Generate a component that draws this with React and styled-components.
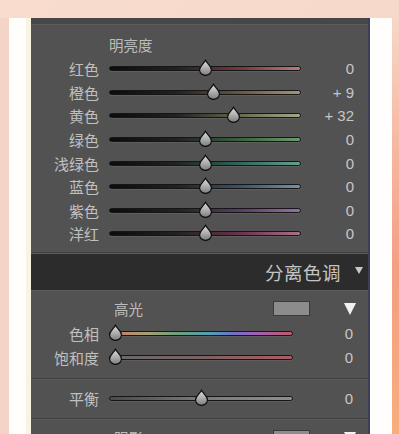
import React from 'react'
import styled, { createGlobalStyle } from 'styled-components'

const GlobalStyle = createGlobalStyle`
    *, *::before, *::after {
        box-sizing: border-box;
    }
    html, body {
        margin: 0;
        padding: 0;
        background: #f6d9cb;
        overflow: hidden;
    }
    body {
        width: 399px;
        height: 434px;
        font-family: "Noto Sans CJK SC", "Noto Sans", sans-serif;
    }
`;

const Page = styled.div`
    width: 399px;
    height: 434px;
    display: flex;
    flex-direction: column;
    background: linear-gradient(135deg, #f8dccd 0%, #f6d8ca 60%, #f3d0c4 100%);
`;

const TopBand = styled.div`
    height: 18px;
    flex: none;
`;

const Stage = styled.div`
    flex: 1;
    display: flex;
    min-height: 0;
`;

const Edge = styled.div`
    width: ${p => p.$w}px;
    flex: none;
    background: ${p => p.$bg};
`;

const WhiteStrip = styled.div`
    width: ${p => p.$w}px;
    flex: none;
    background: ${p => p.$bg || '#fffefb'};
    border-right: ${p => p.$cream ? '5px solid #f9f3e1' : 'none'};
    border-left: ${p => p.$line ? '2px solid #3d3d5c' : 'none'};
`;

const Panel = styled.div`
    width: 337px;
    flex: none;
    background: #525252;
    color: #c2c2c2;
    overflow: hidden;
`;

const PanelTop = styled.div`
    height: 7px;
    background: #474747;
    border-bottom: 1px solid #5b5b5b;
`;

const Section = styled.div`
    padding: ${p => p.$pad || '8px 0'};
    border-bottom: ${p => p.$last ? 'none' : '1px solid #3f3f3f'};
    box-shadow: ${p => p.$last ? 'none' : '0 1px 0 #5c5c5c'};
`;

const Title = styled.div`
    height: ${p => p.$h || 24}px;
    display: flex;
    align-items: center;
    padding-left: ${p => p.$indent}px;
    font-size: 14.5px;
    color: #bdbdbd;
`;

const TitleRow = styled.div`
    height: 26px;
    display: grid;
    grid-template-columns: 242px 37px 1fr;
    align-items: center;
`;

const Swatch = styled.div`
    height: 15px;
    background: #8c8c8c;
    border: 1px solid #3a3a3a;
`;

const BigArrow = styled.div`
    justify-self: end;
    margin-right: 12px;
    width: 0;
    height: 0;
    border-left: 6px solid transparent;
    border-right: 6px solid transparent;
    border-top: 12px solid #f2f2f2;
`;

const Row = styled.div`
    height: ${p => p.$h}px;
    display: grid;
    grid-template-columns: 68px ${p => p.$track}px 1fr;
    column-gap: 10px;
    align-items: center;
`;

const Label = styled.span`
    text-align: right;
    font-size: 15px;
    line-height: 1;
    color: #c0c0c0;
    white-space: nowrap;
`;

const Value = styled.span`
    text-align: right;
    padding-right: ${p => p.$pr}px;
    font-family: "Liberation Sans", Arial, sans-serif;
    font-size: 15px;
    color: #c6c6c6;
    white-space: pre;
`;

const Track = styled.div`
    position: relative;
    height: 5px;
    border-radius: 3px;
    border: 1px solid #161616;
    background: ${p => p.$bg};
    box-shadow: 0 1px 0 #5e5e5e;
`;

const Thumb = styled.svg`
    position: absolute;
    top: -8px;
    width: 15px;
    height: 17px;
    margin-left: -7.5px;
`;

const Header = styled.div`
    height: 38px;
    background: #2c2c2c;
    border-top: 1px solid #5e5e5e;
    border-bottom: 1px solid #5f5f5f;
    display: flex;
    align-items: center;
    justify-content: flex-end;
    gap: 14px;
    padding-right: 5px;
`;

const HeaderText = styled.span`
    font-size: 18.5px;
    color: #c4c4c4;
    letter-spacing: 0.5px;
`;

const SmallArrow = styled.div`
    width: 0;
    height: 0;
    border-left: 4px solid transparent;
    border-right: 4px solid transparent;
    border-top: 7px solid #c8c8c8;
    margin-top: -2px;
`;

const dark = '#0c0c0c 0%, #222 35%'

const luminance = [
    { name: '红色', value: '0', pos: 0, color: `linear-gradient(to right, ${dark}, #7a3a3c 70%, #b87c80 100%)` },
    { name: '橙色', value: '+ 9', pos: 9, color: `linear-gradient(to right, ${dark}, #6e5842 70%, #a8937a 100%)` },
    { name: '黄色', value: '+ 32', pos: 30, color: `linear-gradient(to right, ${dark}, #6c6c4e 70%, #a6a688 100%)` },
    { name: '绿色', value: '0', pos: 0, color: `linear-gradient(to right, ${dark}, #3c6440 70%, #6f9a70 100%)` },
    { name: '浅绿色', value: '0', pos: 0, color: `linear-gradient(to right, ${dark}, #2f6a5e 70%, #62a090 100%)` },
    { name: '蓝色', value: '0', pos: 0, color: `linear-gradient(to right, ${dark}, #3c5670 70%, #7590a8 100%)` },
    { name: '紫色', value: '0', pos: 0, color: `linear-gradient(to right, ${dark}, #5e3c6c 70%, #9672a4 100%)` },
    { name: '洋红', value: '0', pos: 0, color: `linear-gradient(to right, ${dark}, #6c3450 70%, #a8708a 100%)` },
]

const Knob = ({ pos }) => (
    <Thumb viewBox="0 0 14 16" style={{ left: `${pos}%` }}>
        <defs>
            <linearGradient id="knob" x1="0" y1="0" x2="0" y2="1">
                <stop offset="0" stopColor="#e2e2e2" />
                <stop offset="1" stopColor="#7c7c7c" />
            </linearGradient>
        </defs>
        <path d="M7 1.2 C8.6 4.6 12.6 6.6 12.6 10.2 A5.6 5.3 0 0 1 1.4 10.2 C1.4 6.6 5.4 4.6 7 1.2 Z"
            fill="url(#knob)" stroke="#111" strokeWidth="1.2" />
    </Thumb>
)

const Slider = ({ label, value, pos, bg, track, h, pr }) => (
    <Row $h={h} $track={track}>
        <Label>{label}</Label>
        <Track $bg={bg}>
            <Knob pos={pos} />
        </Track>
        <Value $pr={pr}>{value}</Value>
    </Row>
)

const App = () => {
    return (
        <Page>
            <GlobalStyle />
            <TopBand />
            <Stage>
                <Edge $w={9} $bg="#f4d4c6" />
                <WhiteStrip $w={22} $cream />
                <Panel>
                    <PanelTop />
                    <Section $pad="7px 0 6px">
                        <Title $indent={78} $h={25}>明亮度</Title>
                        {luminance.map(row => (
                            <Slider key={row.name} label={row.name} value={row.value}
                                pos={50 + row.pos / 2} bg={row.color} track={192} h={23.6} pr={14} />
                        ))}
                    </Section>
                    <Header>
                        <HeaderText>分离色调</HeaderText>
                        <SmallArrow />
                    </Header>
                    <Section $pad="5px 0 8px">
                        <TitleRow>
                            <Title $indent={83}>高光</Title>
                            <Swatch />
                            <BigArrow />
                        </TitleRow>
                        <Slider label="色相" value="0" pos={3} track={184} h={24} pr={15} 
                            bg="linear-gradient(to right, #c27866 0%, #a8a070 20%, #6aa080 38%, #50a0b8 55%, #7070c8 68%, #a060b8 80%, #c05868 100%)" />
                        <Slider label="饱和度" value="0" pos={3} track={184} h={24} pr={15}
                            bg="linear-gradient(to right, #6a6a6a 0%, #7a6262 50%, #b05a62 100%)" />
                    </Section>
                    <Section $pad="8px 0 7px">
                        <Slider label="平衡" value="0" pos={50} track={184} h={24} pr={15}
                            bg="linear-gradient(to right, #4a4a4a 0%, #7a7a7a 50%, #8e8e8e 100%)" />
                    </Section>
                    <Section $pad="6px 0 0" $last>
                        <TitleRow>
                            <Title $indent={83}>阴影</Title>
                            <Swatch />
                            <BigArrow />
                        </TitleRow>
                    </Section>
                </Panel>
                <WhiteStrip $w={24} $line $bg="#fffefc" />
                <Edge $w={7} $bg="linear-gradient(to bottom, #f7d6c8 0%, #f6b9a2 30%, #f49e84 60%, #f7ae7c 100%)" />
            </Stage>
        </Page>
    )
}

export default App
